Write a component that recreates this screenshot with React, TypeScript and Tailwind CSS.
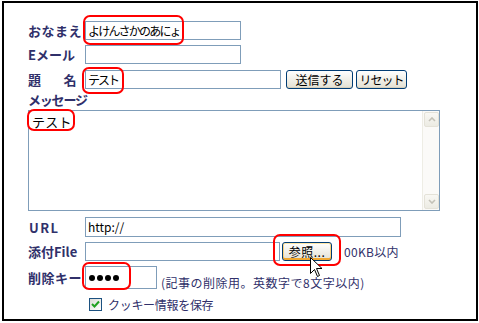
import React from "react";

const jp = "font-['Noto_Sans_CJK_JP','Noto_Sans',sans-serif]";

function Label({ children, className = "" }: { children: React.ReactNode; className?: string }) {
  return (
    <div className={`w-[57px] shrink-0 text-[13px] font-bold leading-none text-[#30306a] tracking-[0.5px] ${className}`}>
      {children}
    </div>
  );
}

function Input({ w, h = 19, children }: { w: number; h?: number; children?: React.ReactNode }) {
  return (
    <div
      className="border border-[#7f9db9] bg-white flex items-center pl-[2px] text-[12px] leading-none text-black overflow-hidden"
      style={{ width: w, height: h }}
    >
      {children}
    </div>
  );
}

function XPButton({ w, children, hover = false }: { w: number; children: React.ReactNode; hover?: boolean }) {
  return (
    <div
      className={`h-[19px] rounded-[3px] border border-[#003c74] bg-linear-to-b from-white to-[#e3e0d2] flex items-center justify-center text-[12px] leading-none text-black ${
        hover ? "shadow-[inset_0_-2px_0_#f0a830,inset_0_1px_0_#ffe7a8,inset_1px_0_0_#fcd27a,inset_-1px_0_0_#fcd27a]" : "shadow-[inset_0_-1px_0_#d6d0bd]"
      }`}
      style={{ width: w }}
    >
      {children}
    </div>
  );
}

function RedBox({ l, t, w, h }: { l: number; t: number; w: number; h: number }) {
  return (
    <div
      className="absolute border-2 border-[#ff0000] rounded-[7px] pointer-events-none"
      style={{ left: l, top: t, width: w, height: h }}
    />
  );
}

export default function App() {
  return (
    <div className={`w-[479px] h-[323px] bg-white overflow-hidden ${jp}`}>
      <div className="ml-[2px] mt-[1px] w-[476px] h-[320px] border-2 border-black relative pl-[24px] pt-[18px]">
        {/* Row 1 */}
        <div className="flex items-center h-[19px]">
          <Label className="tracking-[0.3px]">おなまえ</Label>
          <Input w={156}>
            <span className="tracking-[-1.8px] text-[12px]">よけんさかのあにょ</span>
          </Input>
        </div>
        {/* Row 2 */}
        <div className="flex items-center h-[19px] mt-[5px]">
          <Label className="tracking-[0px]">Eメール</Label>
          <Input w={156} />
        </div>
        {/* Row 3 */}
        <div className="flex items-center h-[19px] mt-[6px]">
          <Label>
            <span>題</span>
            <span className="ml-[22px]">名</span>
          </Label>
          <Input w={196}>
            <span className="tracking-[-2px]">テスト</span>
          </Input>
          <div className="ml-[5px]">
            <XPButton w={67}>送信する</XPButton>
          </div>
          <div className="ml-[3px]">
            <XPButton w={51}>
              <span className="tracking-[-1px]">リセット</span>
            </XPButton>
          </div>
        </div>
        {/* Message label */}
        <div className="mt-[2px] h-[16px] flex items-center text-[13px] font-bold leading-none text-[#30306a] tracking-[-1.2px]">
          メッセージ
        </div>
        {/* Textarea */}
        <div className="mt-[3px] w-[412px] h-[101px] border border-[#7f9db9] bg-white flex">
          <div className="flex-1 pl-[3px] pt-[4px] text-[13px] leading-none text-black tracking-[0.3px]">テスト</div>
          <div className="w-[17px] h-full bg-[#fbfaf8] border-l border-[#eeede5] flex flex-col justify-between p-[1px]">
            <div className="w-[15px] h-[15px] rounded-[2px] border border-[#e4e2d8] bg-linear-to-b from-[#f9f8f4] to-[#ecebe3] flex items-center justify-center">
              <svg width="8" height="5" viewBox="0 0 8 5">
                <path d="M1 4 L4 1 L7 4" fill="none" stroke="#c3c1b7" strokeWidth="1.6" />
              </svg>
            </div>
            <div className="w-[15px] h-[15px] rounded-[2px] border border-[#e4e2d8] bg-linear-to-b from-[#f9f8f4] to-[#ecebe3] flex items-center justify-center">
              <svg width="8" height="5" viewBox="0 0 8 5">
                <path d="M1 1 L4 4 L7 1" fill="none" stroke="#c3c1b7" strokeWidth="1.6" />
              </svg>
            </div>
          </div>
        </div>
        {/* URL */}
        <div className="flex items-center h-[20px] mt-[6px]">
          <Label className="tracking-[1.5px] pl-[1px]">URL</Label>
          <Input w={316} h={20}>
            <span className="text-[12px]">http://</span>
          </Input>
        </div>
        {/* File */}
        <div className="flex items-center h-[19px] mt-[5px]">
          <Label className="tracking-[0px]">添付File</Label>
          <Input w={195} />
          <div className="ml-[2px]">
            <XPButton w={50} hover>
              <span className="tracking-[0.5px]">参照...</span>
            </XPButton>
          </div>
          <span className="ml-[12px] text-[12px] leading-none text-[#30306a] tracking-[0.3px]">00KB以内</span>
        </div>
        {/* Delete key */}
        <div className="flex items-center h-[23px] mt-[5px]">
          <Label className="tracking-[0.3px]">削除キー</Label>
          <Input w={72} h={23}>
            <div className="flex gap-[2px] ml-[1px]">
              <span className="w-[6px] h-[6px] rounded-full bg-black" />
              <span className="w-[6px] h-[6px] rounded-full bg-black" />
              <span className="w-[6px] h-[6px] rounded-full bg-black" />
              <span className="w-[6px] h-[6px] rounded-full bg-black" />
            </div>
          </Input>
          <span className="ml-[4px] mt-[10px] text-[12px] leading-none text-[#30306a] tracking-[0.5px]">
            (記事の削除用。英数字で8文字以内)
          </span>
        </div>
        {/* Cookie checkbox */}
        <div className="flex items-center h-[13px] mt-[9px] ml-[61px]">
          <div className="w-[13px] h-[13px] border border-[#1c5180] bg-linear-to-br from-[#dcdcd7] to-white flex items-center justify-center">
            <svg width="9" height="9" viewBox="0 0 9 9">
              <path d="M1 4 L3.5 6.5 L8 1.5" fill="none" stroke="#21a121" strokeWidth="2" />
            </svg>
          </div>
          <span className="ml-[6px] text-[12px] leading-none text-[#30306a] tracking-[-0.3px]">クッキー情報を保存</span>
        </div>

        {/* Red highlight boxes */}
        <RedBox l={79} t={12} w={101} h={30} />
        <RedBox l={78} t={64} w={42} h={27} />
        <RedBox l={23} t={106} w={48} h={22} />
        <RedBox l={269} t={231} w={68} h={32} />
        <RedBox l={78} t={259} w={49} h={28} />

        {/* Mouse cursor */}
        <svg className="absolute" style={{ left: 306, top: 254 }} width="13" height="21" viewBox="0 0 13 21">
          <path
            d="M0.5 0.5 L0.5 16.5 L4.5 12.5 L7.5 19.5 L9.5 18.5 L6.5 11.5 L12 11.5 Z"
            fill="white"
            stroke="black"
            strokeWidth="1"
            strokeLinejoin="miter"
          />
        </svg>
      </div>
    </div>
  );
}
